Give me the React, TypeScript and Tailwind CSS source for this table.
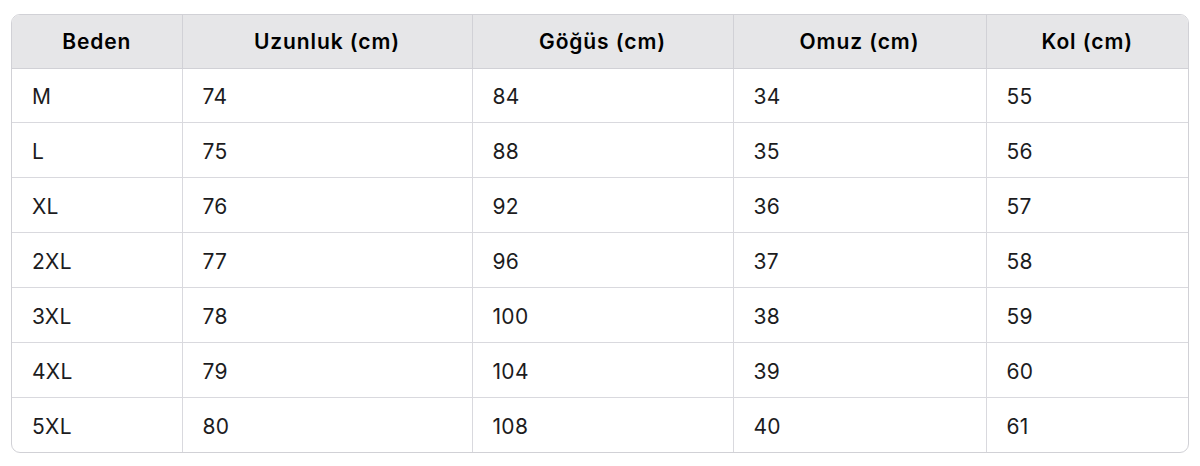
import React from "react";

const headers = ["Beden", "Uzunluk (cm)", "Göğüs (cm)", "Omuz (cm)", "Kol (cm)"];

const rows = [
  ["M", "74", "84", "34", "55"],
  ["L", "75", "88", "35", "56"],
  ["XL", "76", "92", "36", "57"],
  ["2XL", "77", "96", "37", "58"],
  ["3XL", "78", "100", "38", "59"],
  ["4XL", "79", "104", "39", "60"],
  ["5XL", "80", "108", "40", "61"],
];

const widths = ["w-[170px]", "w-[290px]", "w-[261px]", "w-[253px]", "w-auto"];

const App: React.FC = () => {
  return (
    <div className="bg-white w-[1200px] h-[466px] px-[11px] pt-[14px] font-['Inter',sans-serif] text-[21px] text-[#1c1c1e]">
      <div className="overflow-hidden rounded-[9px] border border-[#d1d1d6]">
        <table className="w-full table-fixed border-collapse">
          <colgroup>
            {widths.map((w, i) => (
              <col key={i} className={w} />
            ))}
          </colgroup>
          <thead>
            <tr className="bg-[#e6e6e8] h-[53px]">
              {headers.map((h, i) => (
                <th
                  key={h}
                  className={`font-semibold text-black text-center tracking-[0.9px] border-b border-[#d1d1d6] ${i > 0 ? "border-l" : ""}`}
                >
                  {h}
                </th>
              ))}
            </tr>
          </thead>
          <tbody>
            {rows.map((r, ri) => (
              <tr key={r[0]} className="h-[54.9px]">
                {r.map((c, ci) => (
                  <td
                    key={ci}
                    className={`pl-[20px] pt-[3px] font-normal tracking-[0.3px] border-[#d9d9de] ${ci > 0 ? "border-l" : ""} ${ri < rows.length - 1 ? "border-b" : ""}`}
                  >
                    {c}
                  </td>
                ))}
              </tr>
            ))}
          </tbody>
        </table>
      </div>
    </div>
  );
};

export default App;
